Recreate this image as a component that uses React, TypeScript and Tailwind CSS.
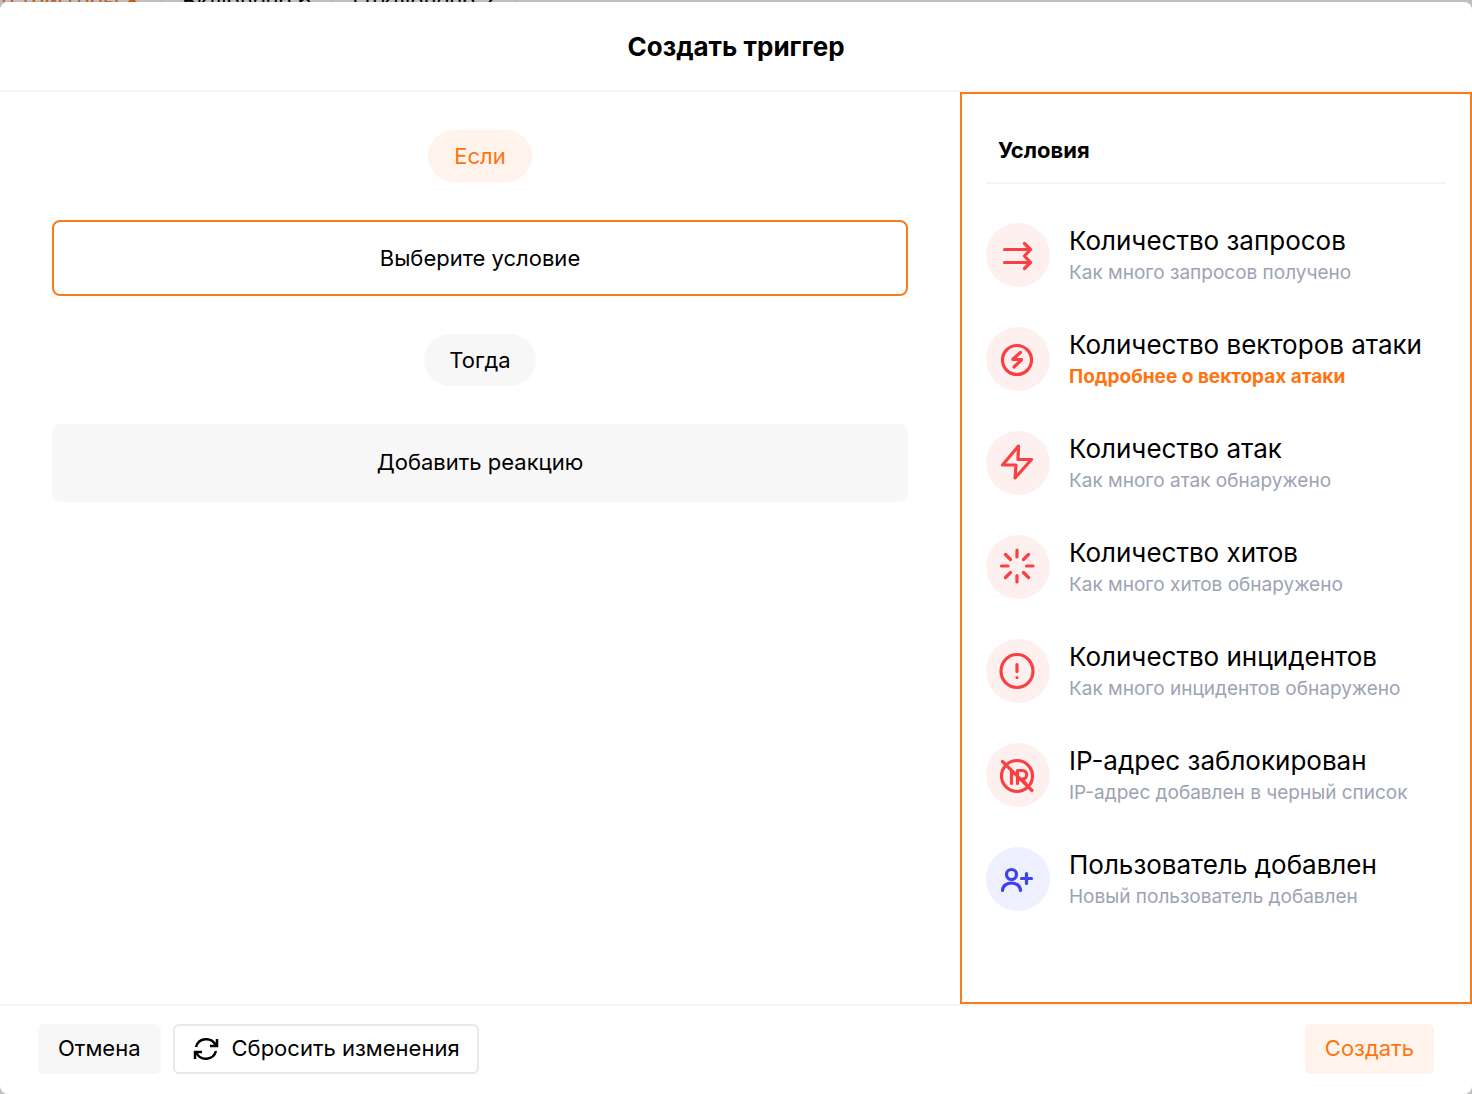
import type { ReactNode } from 'react';

type Condition = { title: string; note: string; link?: boolean; tone?: 'blue'; icon: ReactNode };

const conditions: Condition[] = [
  {
    title: 'Количество запросов',
    note: 'Как много запросов получено',
    icon: <path d="M18.5 26.5H44M18.5 39.5H44M38.5 20.5L44.5 26.5L38.5 33L44.5 39.5L38.5 45.5" />,
  },
  {
    title: 'Количество векторов атаки',
    note: 'Подробнее о векторах атаки',
    link: true,
    icon: (
      <>
        <circle cx="31" cy="33" r="14.5" />
        <path d="M34.5 25.5L27 32L35.5 33L28 40M27 32.5H35.500" />
      </>
    ),
  },
  {
    title: 'Количество атак',
    note: 'Как много атак обнаружено',
    icon: <path d="M32.5 15L16.500 34H30L29 47L45.500 28.500H32Z" />,
  },
  {
    title: 'Количество хитов',
    note: 'Как много хитов обнаружено',
    icon: (
      <path d="M31 15V22M31 40.500V47M15.500 31H22M40.500 31H47M19.500 19.500L24.500 24.500M37.500 37.500L42.500 42.500M19.500 42.500L24.500 37.500M37.500 24.500L42.500 19.500" />
    ),
  },
  {
    title: 'Количество инцидентов',
    note: 'Как много инцидентов обнаружено',
    icon: (
      <>
        <ellipse cx="31" cy="32" rx="16" ry="16.500" />
        <path d="M31 25.500V32.500M31 38.500V38.600" />
      </>
    ),
  },
  {
    title: 'IP-адрес заблокирован',
    note: 'IP-адрес добавлен в черный список',
    icon: (
      <>
        <circle cx="31" cy="33" r="15.500" />
        <path d="M16.500 18.500L46 47.500M25.500 28V40.500M31.500 40.500V27.500H36.500A4 4 0 0 1 36.500 36H31.500M36 36L40 41" />
      </>
    ),
  },
  {
    title: 'Пользователь добавлен',
    note: 'Новый пользователь добавлен',
    tone: 'blue',
    icon: (
      <>
        <circle cx="25.500" cy="27.500" r="5" />
        <path d="M16.500 43.500C17 33.500 34 33.500 34.500 43.500M35.500 31.500H45.500M40.500 26.500V36.500" />
      </>
    ),
  },
];

export default function App() {
  return (
    <div className="flex min-h-screen flex-col bg-[#bfbfbf] font-['Inter',sans-serif] text-black">
      <nav aria-hidden="true" className="flex h-0.5 items-center overflow-hidden whitespace-nowrap text-[22px] leading-6">
        <span className="flex w-[163px] shrink-0 justify-end border-r-2 border-[#b5b5b5] pr-[22px] text-[#c65a0c]">Все триггеры 8</span>
        <span className="flex w-[170px] shrink-0 justify-center border-r-2 border-[#b5b5b5]">Включено 6</span>
        <span className="flex w-[184px] shrink-0 justify-center border-r-2 border-[#b5b5b5]">Отключено 2</span>
      </nav>
      <main className="flex flex-1 flex-col rounded-lg bg-white">
        <header className="flex h-[90px] items-center justify-center border-b-2 border-[#f5f5f5] pt-0.5">
          <h1 className="text-[26px] leading-8 font-bold">Создать триггер</h1>
        </header>
        <div className="flex flex-1">
          <section className="flex flex-1 flex-col items-center px-[52px] pt-[38px]">
            <span className="flex h-[52px] items-center rounded-full bg-[#fff3ec] px-[26px] text-[22px] text-[#ff7410]">Если</span>
            <button type="button" className="mt-[38px] h-[76px] w-full rounded-lg border-2 border-[#f97c1c] text-[22px]">
              Выберите условие
            </button>
            <span className="mt-[38px] flex h-[52px] items-center rounded-full bg-[#f7f7f7] px-[25px] text-[22px]">Тогда</span>
            <button type="button" className="mt-[38px] h-[78px] w-full rounded-lg bg-[#f7f7f7] pb-0.5 text-[22px]">
              Добавить реакцию
            </button>
          </section>
          <aside className="w-[512px] border-2 border-[#f97c1c] px-6 pt-9">
            <h2 className="border-b-2 border-[#f5f5f5] px-3 pt-1 pb-4 text-[22px] leading-8 font-bold">Условия</h2>
            <ul className="mt-[39px] flex flex-col gap-10">
              {conditions.map((c) => (
                <li key={c.title} className="flex h-16 items-center gap-[19px]">
                  <svg
                    viewBox="0 0 64 64"
                    aria-hidden="true"
                    fill="none"
                    strokeWidth="3.2"
                    strokeLinecap="round"
                    strokeLinejoin="round"
                    className={
                      c.tone === 'blue'
                        ? 'size-16 shrink-0 rounded-full bg-[#eef0ff] stroke-[#3d42f0]'
                        : 'size-16 shrink-0 rounded-full bg-[#fff0f0] stroke-[#f94144]'
                    }
                  >
                    {c.icon}
                  </svg>
                  <div className="flex flex-col whitespace-nowrap">
                    <button type="button" className="text-left text-[26px] leading-9">{c.title}</button>
                    {c.link ? (
                      <a href="#vectors" className="text-[19px] leading-7 font-bold text-[#ff7410]">{c.note}</a>
                    ) : (
                      <span className="text-[19px] leading-7 text-[#9ca3b4]">{c.note}</span>
                    )}
                  </div>
                </li>
              ))}
            </ul>
          </aside>
        </div>
        <footer className="flex h-[90px] items-center gap-3 border-t-2 border-[#f5f5f5] px-[38px] pb-0.5">
          <button type="button" className="h-[50px] rounded-md bg-[#f7f7f7] px-5 pb-0.5 text-[22px]">Отмена</button>
          <button type="button" className="flex h-[50px] items-center gap-3 rounded-md border-2 border-[#e8e8e8] px-[17px] pb-0.5 text-[22px]">
            <svg viewBox="0 0 28 28" aria-hidden="true" className="size-7 fill-none stroke-black" strokeWidth="2.500">
              <path d="M4 13A10.500 10.500 0 0 1 23.500 11M25 5V12H18M24 17A10.500 10.500 0 0 1 4.500 19M3 25V18H10" />
            </svg>
            Сбросить изменения
          </button>
          <button type="button" className="ml-auto h-[50px] rounded-md bg-[#fff3ec] px-5 pb-0.5 text-[22px] text-[#ff7410]">Создать</button>
        </footer>
      </main>
    </div>
  );
}
